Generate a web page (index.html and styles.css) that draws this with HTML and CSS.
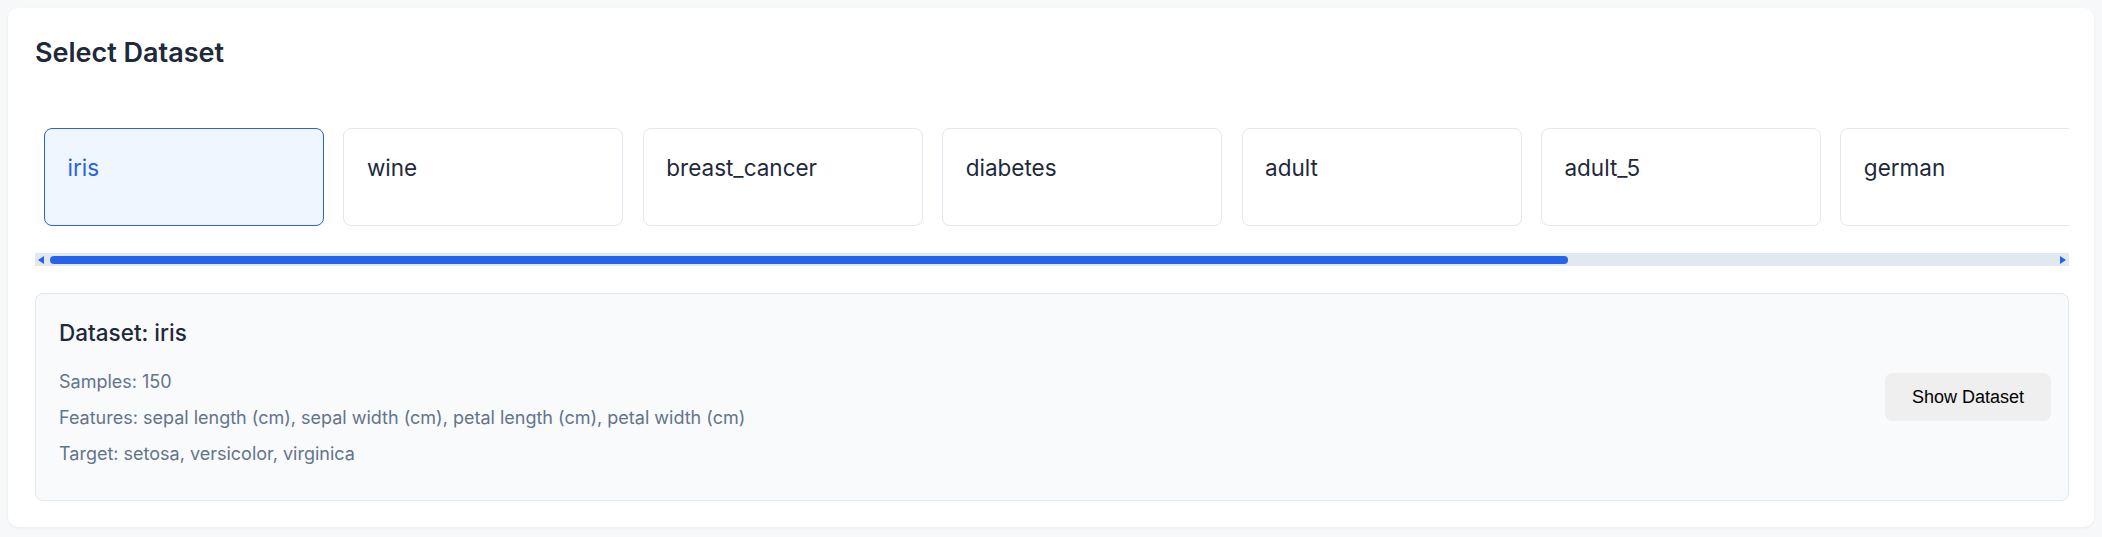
FILE: index.html
```html
<!DOCTYPE html>
<html lang="en">
<head>
<meta charset="utf-8">
<title>Select Dataset</title>
<link rel="stylesheet" href="styles.css">
</head>
<body>
  <section class="panel">
    <h2 class="panel-title">Select Dataset</h2>

    <div class="scroller">
      <div class="dataset-row">
        <div class="dataset-card is-active" role="button">iris</div>
        <div class="dataset-card" role="button">wine</div>
        <div class="dataset-card" role="button">breast_cancer</div>
        <div class="dataset-card" role="button">diabetes</div>
        <div class="dataset-card" role="button">adult</div>
        <div class="dataset-card" role="button">adult_5</div>
        <div class="dataset-card" role="button">german</div>
      </div>
      <div class="scrollbar">
        <span class="scroll-arrow scroll-arrow-left"></span>
        <div class="scroll-track">
          <div class="scroll-thumb"></div>
        </div>
        <span class="scroll-arrow scroll-arrow-right"></span>
      </div>
    </div>

    <div class="info">
      <div class="info-text">
        <h3 class="info-title">Dataset: iris</h3>
        <p class="info-line">Samples: 150</p>
        <p class="info-line">Features: sepal length (cm), sepal width (cm), petal length (cm), petal width (cm)</p>
        <p class="info-line">Target: setosa, versicolor, virginica</p>
      </div>
      <button class="show-btn">Show Dataset</button>
    </div>
  </section>
</body>
</html>
```
FILE: styles.css
```css
* {
  box-sizing: border-box;
}

html, body {
  margin: 0;
  padding: 0;
}

body {
  background: #f7f8fa;
  font-family: Inter, "Noto Sans", "Liberation Sans", sans-serif;
  padding: 8px;
}

.panel {
  background: #ffffff;
  border-radius: 10px;
  box-shadow: 0 1px 3px rgba(15, 23, 42, 0.06);
  padding: 27px 25px 28px 27px;
  height: 519px;
}

.panel-title {
  margin: 3px 0 0;
  font-size: 27px;
  line-height: 29px;
  font-weight: 600;
  color: #1e293b;
}

.scroller {
  margin-top: 61px;
}

.dataset-row {
  display: flex;
  gap: 19.4px;
  overflow: hidden;
  padding-left: 9px;
}

.dataset-card {
  flex: 0 0 280px;
  height: 98px;
  background: #ffffff;
  border: 1px solid #e2e8f0;
  border-radius: 8px;
  padding: 25px 22px 0 22.5px;
  font-size: 22.5px;
  line-height: 28px;
  font-weight: 400;
  color: #1e293b;
  cursor: pointer;
  white-space: nowrap;
}

.dataset-card.is-active {
  background: #eff6ff;
  border-color: #2563eb;
  color: #2563eb;
}

.scrollbar {
  margin-top: 27px;
  height: 13px;
  background: #e2e8f0;
  display: flex;
  align-items: center;
}

.scroll-arrow {
  width: 0;
  height: 0;
  border-top: 4px solid transparent;
  border-bottom: 4px solid transparent;
  flex: 0 0 auto;
}

.scroll-arrow-left {
  border-right: 6px solid #2563eb;
  margin-left: 3px;
  margin-right: 6px;
}

.scroll-arrow-right {
  border-left: 6px solid #2563eb;
  margin-left: 4px;
  margin-right: 3px;
}

.scroll-track {
  flex: 1;
  height: 8px;
}

.scroll-thumb {
  width: 75.65%;
  height: 8px;
  border-radius: 4px;
  background: #2563eb;
}

.info {
  margin-top: 27px;
  background: #f8fafc;
  border: 1px solid #e2e8f0;
  border-radius: 8px;
  padding: 24px 17px 24px 23px;
  display: flex;
  justify-content: space-between;
  align-items: center;
}

.info-title {
  margin: 0 0 21px;
  font-size: 22.5px;
  line-height: 29px;
  font-weight: 500;
  color: #1e293b;
}

.info-line {
  margin: 0 0 9px;
  font-size: 18px;
  line-height: 27px;
  color: #64748b;
}

.show-btn {
  width: 166px;
  height: 48px;
  border: none;
  border-radius: 8px;
  background: #efefef;
  font-family: "Liberation Sans", Arial, sans-serif;
  font-size: 18px;
  color: #000000;
  cursor: pointer;
}
```
